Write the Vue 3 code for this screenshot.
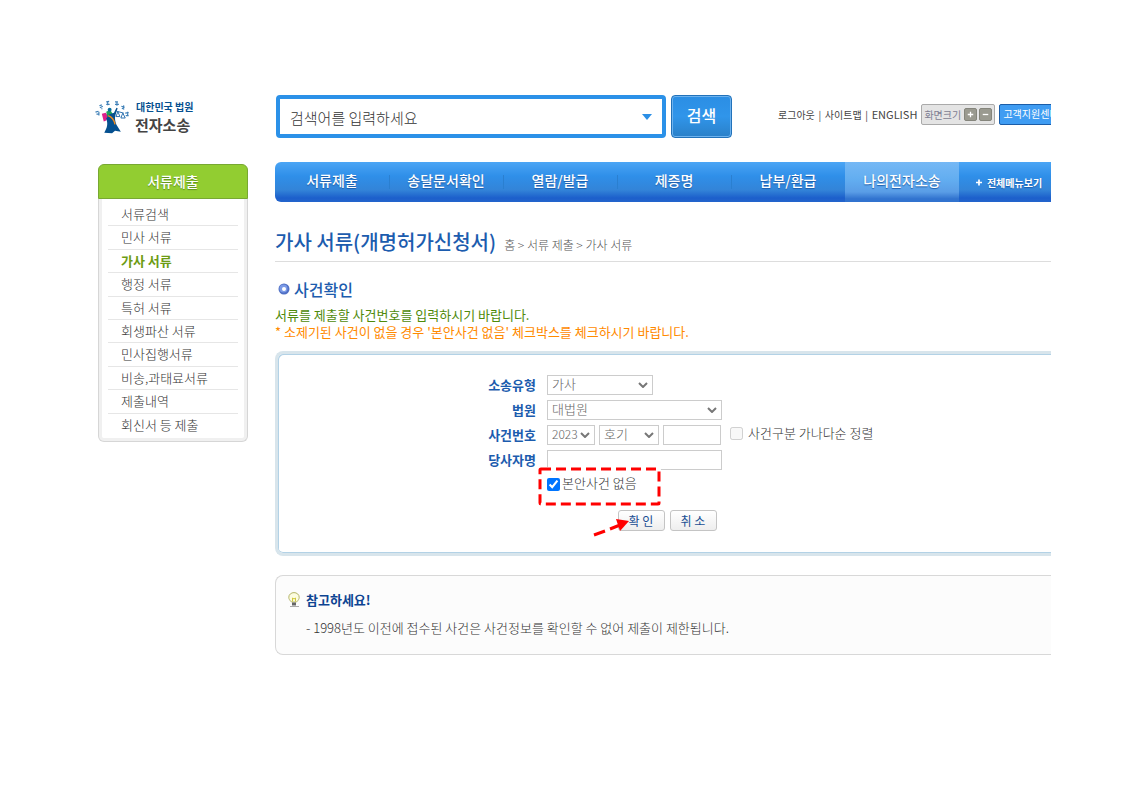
<script setup>
import { ref } from 'vue'

const keyword = ref('')
const noMainCase = ref(true)
const sortByName = ref(false)
const caseNumber = ref('')
const partyName = ref('')

const sideItems = [
  '서류검색', '민사 서류', '가사 서류', '행정 서류', '특허 서류',
  '회생파산 서류', '민사집행서류', '비송,과태료서류', '제출내역', '회신서 등 제출'
]
const activeSide = '가사 서류'

const navItems = ['서류제출', '송달문서확인', '열람/발급', '제증명', '납부/환급', '나의전자소송']
const activeNav = '나의전자소송'
</script>

<template>
  <div class="page">
    <header class="header">
      <a class="logo" href="#">
        <svg class="logo-mark" viewBox="0 0 40 40" aria-hidden="true">
          <g fill="none" stroke="#3f80b8" stroke-width="1.2">
            <path d="M0 13.500l3-1M1 15.500h2M3.500 13v4" />
            <path d="M4 7l2.500-1M4.500 9l3-1.500M6.500 9.500v1" />
            <path d="M11 3l3-.5M11 5.500h3.500M12.500 3v3.500" />
            <path d="M20 3h3M20 5.500h4M22 3v4" />
            <path d="M26.500 7.500l3.500 1M27 9.500l2.500 1M29 6.500l-.5 3" />
            <path d="M30.500 14.500l3.500-.5M31 17h3M33 13v3.500" />
          </g>
          <path d="M6.500 15l4-1 2.500 4-2 4-2.500 1z" fill="#e0218a" />
          <path d="M11 13l4-2 3 5-4 3-2-1z" fill="#1fa05a" />
          <circle cx="14.500" cy="11" r="2" fill="#0b6fa0" />
          <path d="M11 20l3-4 5-2 2.500-5 1.200.5-2.200 7c-1 3-.5 6 1 10l4.500 7-6-1-3 2.500-8-.5c3-5 4-9 2-14.500z" fill="#05508f" />
          <path d="M13 17c3 1 6 4 7 9" fill="none" stroke="#f08a1c" stroke-width="1.500" />
          <path d="M21.500 12.500l7.500 2M23 13l-2 5h4zM28 14.500l-2 5h4.500z" fill="none" stroke="#2a6fae" stroke-width="1" />
        </svg>
        <span class="logo-text">
          <span class="logo-small">대한민국 법원</span>
          <strong class="logo-big">전자소송</strong>
        </span>
      </a>
      <div class="top">
        <form class="search" @submit.prevent>
          <div class="search-box">
            <input v-model="keyword" class="search-input" type="text" aria-label="검색어" placeholder="검색어를 입력하세요" />
            <svg class="search-arrow" viewBox="0 0 10 6" aria-hidden="true"><path d="M0 0h10L5 6z" fill="#2b8fe6" /></svg>
          </div>
          <button class="search-button" type="submit">검색</button>
        </form>
        <div class="utility">
          <a href="#">로그아웃</a><i class="bar">|</i>
          <a href="#">사이트맵</a><i class="bar">|</i>
          <a class="english" href="#">ENGLISH</a>
          <span class="zoomer">
            <span class="zoomer-label">화면크기</span>
            <button type="button" aria-label="크게"><svg viewBox="0 0 12 12"><path d="M3 6h6M6 3v6" stroke="#fff" stroke-width="1.4" /></svg></button>
            <button type="button" aria-label="작게"><svg viewBox="0 0 12 12"><path d="M3 6h6" stroke="#fff" stroke-width="1.4" /></svg></button>
          </span>
          <a class="support" href="#">고객지원센터</a>
        </div>
      </div>
    </header>

    <div class="body">
      <aside class="side">
        <h2 class="side-title">서류제출</h2>
        <ul class="side-list">
          <li v-for="item in sideItems" :key="item">
            <a href="#" :class="{ active: item === activeSide }">{{ item }}</a>
          </li>
        </ul>
      </aside>

      <main class="main">
        <nav class="nav">
          <a v-for="item in navItems" :key="item" class="nav-item" :class="{ current: item === activeNav }" href="#">{{ item }}</a>
          <a class="nav-all" href="#">
            <svg viewBox="0 0 7 7" aria-hidden="true"><path d="M0 3.5h7M3.5 0v7" stroke="#fff" stroke-width="2" /></svg>
            전체메뉴보기
          </a>
        </nav>

        <div class="title-row">
          <h1>가사 서류(개명허가신청서)</h1>
          <span class="crumbs">홈 &gt; 서류 제출 &gt; 가사 서류</span>
        </div>

        <h2 class="section">
          <svg viewBox="0 0 12 12" aria-hidden="true">
            <circle cx="6" cy="6" r="5.5" fill="#4f6fc4" />
            <circle cx="5.5" cy="5.5" r="4" fill="#7b9ae6" />
            <circle cx="6" cy="6" r="2" fill="#fff" />
          </svg>
          사건확인
        </h2>
        <p class="guide">서류를 제출할 사건번호를 입력하시기 바랍니다.</p>
        <p class="guide warn">* 소제기된 사건이 없을 경우 '본안사건 없음' 체크박스를 체크하시기 바랍니다.</p>

        <form class="case-form" @submit.prevent>
          <div class="row">
            <label class="name" for="kind">소송유형</label>
            <div class="fields">
              <span class="pick pick-kind">
                <select id="kind" disabled><option>가사</option></select>
                <svg viewBox="0 0 10 6" aria-hidden="true"><path d="M1 1l4 4 4-4" /></svg>
              </span>
            </div>
          </div>
          <div class="row">
            <label class="name" for="court">법원</label>
            <div class="fields">
              <span class="pick pick-court">
                <select id="court" disabled><option>대법원</option></select>
                <svg viewBox="0 0 10 6" aria-hidden="true"><path d="M1 1l4 4 4-4" /></svg>
              </span>
            </div>
          </div>
          <div class="row">
            <label class="name" for="year">사건번호</label>
            <div class="fields">
              <span class="pick pick-year">
                <select id="year" disabled><option>2023</option></select>
                <svg viewBox="0 0 10 6" aria-hidden="true"><path d="M1 1l4 4 4-4" /></svg>
              </span>
              <span class="pick pick-mark">
                <select disabled aria-label="사건구분"><option>호기</option></select>
                <svg viewBox="0 0 10 6" aria-hidden="true"><path d="M1 1l4 4 4-4" /></svg>
              </span>
              <input v-model="caseNumber" class="box number" type="text" aria-label="번호" disabled />
              <label class="check sort"><input v-model="sortByName" type="checkbox" disabled />사건구분 가나다순 정렬</label>
            </div>
          </div>
          <div class="row">
            <label class="name" for="party">당사자명</label>
            <div class="fields">
              <input id="party" v-model="partyName" class="box party" type="text" disabled />
            </div>
          </div>
          <div class="row">
            <span></span>
            <div class="fields marked">
              <label class="check none"><input v-model="noMainCase" type="checkbox" />본안사건 없음</label>
              <svg class="callout" viewBox="0 0 124 72" aria-hidden="true">
                <rect x="2" y="2" width="119" height="35" rx="1" class="halo" />
                <rect x="2" y="2" width="119" height="35" rx="1" class="dash" />
                <path d="M56 68l11-4M72 62l10-4" class="shaft" />
                <path d="M78 52l13 2-9 10z" fill="#f00" />
              </svg>
            </div>
          </div>
          <div class="actions">
            <button type="submit">확 인</button>
            <button type="button">취 소</button>
          </div>
        </form>

        <section class="notice">
          <h3>
            <svg viewBox="0 0 12 16" aria-hidden="true">
              <path d="M3.5 10C1.5 8 .8 7 .8 5.2a5.2 4.6 0 0 1 10.4 0C11.2 7 10.5 8 8.500 10z" fill="#fcfce0" stroke="#b4b468" />
              <path d="M4.500 9.500V6l1.500 1 1.500-1v3.500" fill="none" stroke="#d0c83c" />
              <path d="M4 10.500h4v3H4z" fill="#666" />
              <path d="M2 14.500h9" stroke="#aaa" />
            </svg>
            참고하세요!
          </h3>
          <p>- 1998년도 이전에 접수된 사건은 사건정보를 확인할 수 없어 제출이 제한됩니다.</p>
        </section>
      </main>
    </div>
  </div>
</template>

<style>
body {
  margin: 0;
  background: #fff;
}
</style>

<style scoped>
.page,
.page button,
.page input,
.page select {
  font-family: "Noto Sans CJK KR", sans-serif;
}
.page {
  box-sizing: border-box;
  padding: 95px 71px 40px 95px;
  overflow: hidden;
  color: #333;
  font-size: 13px;
  font-weight: 300;
}
.page * {
  box-sizing: border-box;
}
a {
  color: inherit;
  text-decoration: none;
}
h1, h2, h3, p, ul {
  margin: 0;
  padding: 0;
}
.header,
.body {
  display: grid;
  grid-template-columns: 153px minmax(0, 1fr);
  column-gap: 27px;
}
.header {
  margin-bottom: 24px;
}

.logo {
  display: flex;
  align-items: flex-start;
  padding-top: 4px;
}
.logo-mark {
  width: 40px;
  height: 39px;
}
.logo-text {
  display: flex;
  flex-direction: column;
  white-space: nowrap;
}
.logo-small {
  color: #05508f;
  font-size: 10px;
  font-weight: 700;
  line-height: 16px;
  padding-left: 1px;
}
.logo-big {
  color: #444;
  font-size: 15px;
  font-weight: 700;
  line-height: 20px;
}

.top {
  display: flex;
  justify-content: space-between;
  overflow: hidden;
}
.search {
  display: flex;
  gap: 5px;
  padding-left: 1px;
}
.search-box {
  display: flex;
  align-items: center;
  width: 390px;
  height: 43px;
  padding: 0 10px;
  border: 4px solid #2b91e8;
  border-radius: 4px;
}
.search-input {
  flex: 1;
  min-width: 0;
  height: 32px;
  padding: 2px 0 0;
  border: 0;
  outline: 0;
  background: none;
  color: #444;
  font-size: 15px;
  font-weight: 300;
}
.search-input::placeholder {
  color: #333;
}
.search-arrow {
  width: 10px;
  height: 6px;
}
.search-button {
  width: 61px;
  height: 43px;
  padding: 0 0 3px;
  border: 1px solid #2272ba;
  border-radius: 4px;
  background: linear-gradient(#2b8ee4, #3095ea 50%, #2a80c8);
  box-shadow: inset 0 0 0 1px #6db2ee;
  color: #fff;
  font-size: 16px;
  font-weight: 500;
}
.utility {
  display: flex;
  align-items: center;
  width: 273px;
  height: 22px;
  margin-top: 8px;
  color: #444;
  font-size: 10px;
  font-weight: 400;
  white-space: nowrap;
}
.utility > * {
  flex: none;
}
.bar {
  width: 10px;
  text-align: center;
  font-style: normal;
}
.english {
  font-size: 11px;
}
.zoomer {
  display: flex;
  align-items: center;
  gap: 2px;
  width: 74px;
  height: 21px;
  margin-left: 4px;
  padding-left: 2px;
  border: 1px solid #aaa;
  border-radius: 2px;
  background: #e4e4e4;
}
.zoomer-label {
  width: 38px;
  color: #7d7d92;
}
.zoomer button {
  width: 13px;
  height: 13px;
  padding: 0;
  border: 1px solid #85857c;
  border-radius: 2px;
  background: #9a9a90;
}
.zoomer svg {
  display: block;
  width: 11px;
  height: 11px;
}
.support {
  height: 21px;
  margin-left: 4px;
  padding: 0 3px;
  border: 1px solid #1b5da8;
  border-radius: 2px;
  background: #3f9cf2;
  color: #fff;
  line-height: 18px;
}

.side {
  margin: 2px 0 0 3px;
}
.side-title {
  height: 35px;
  border: 1px solid #78a832;
  border-radius: 6px 6px 0 0;
  background: #92cd31;
  color: #fff;
  font-size: 14px;
  font-weight: 500;
  line-height: 32px;
  text-align: center;
  text-shadow: 0 1px 1px #5d8c1c;
}
.side-list {
  display: grid;
  grid-auto-rows: 1fr;
  min-height: 243px;
  padding: 4px 6px;
  border: 1px solid #d6d6d6;
  border-top: 0;
  border-radius: 0 0 6px 6px;
  box-shadow: inset 3px 0 #f0f0f0, inset -3px 0 #f0f0f0, inset 0 -3px #f0f0f0;
  list-style: none;
}
.side-list li {
  margin: 0 3px;
  padding-left: 13px;
  border-bottom: 1px solid #e6e6e6;
  line-height: 22px;
}
.side-list li:last-child {
  border-bottom: 0;
}
.side-list .active {
  color: #6d9c14;
  font-weight: 700;
}

.nav {
  display: grid;
  grid-template-columns: repeat(6, minmax(0, 114fr)) minmax(0, 92fr);
  height: 40px;
  overflow: hidden;
  border-radius: 6px 0 0 6px;
  background: linear-gradient(#4ba5f5, #2f8fe9 35%, #3384d8 70%, #1c5fcb 90%, #2465cc);
  color: #fff;
  font-size: 14px;
  font-weight: 500;
  line-height: 37px;
  text-align: center;
  text-shadow: 0 1px 1px #1d5ba8;
  white-space: nowrap;
}
.nav-item + .nav-item:not(.current) {
  background: linear-gradient(#2a7fd0, #2a7fd0) 0 50% / 1px 14px no-repeat;
}
.nav .current {
  background: linear-gradient(#75b8f5, #62adf0 45%, #5a9de6 75%, #3173cf 92%);
}
.nav-all {
  display: flex;
  align-items: center;
  justify-content: center;
  gap: 5px;
  padding-left: 8px;
  font-size: 10px;
  font-weight: 700;
}
.nav-all svg {
  width: 6px;
  height: 7px;
}

.title-row {
  display: flex;
  align-items: baseline;
  gap: 8px;
  margin-top: 28px;
  padding-bottom: 6px;
  border-bottom: 1px solid #ddd;
  white-space: nowrap;
}
h1 {
  color: #1c5cae;
  font-size: 20px;
  font-weight: 500;
  line-height: 24px;
}
.crumbs {
  color: #555;
  font-size: 12px;
  line-height: 20px;
}
.section {
  display: flex;
  align-items: center;
  gap: 4px;
  margin: 17px 0 7px;
  padding-left: 3px;
  color: #1c5cae;
  font-size: 16px;
  font-weight: 500;
  line-height: 20px;
}
.section svg {
  width: 12px;
  height: 12px;
}
.guide {
  color: #4f8a0a;
  font-weight: 400;
  line-height: 17px;
}
.guide.warn {
  color: #ff8a00;
}

.case-form {
  display: grid;
  row-gap: 5px;
  margin-top: 11px;
  padding: 21px 0 22px;
  border: 3px solid #d8e5ec;
  border-right: 0;
  border-radius: 8px 0 0 8px;
  box-shadow: inset 1px 1px #b3d2e6, inset 0 -1px #b3d2e6;
}
.row {
  display: grid;
  grid-template-columns: 258px minmax(0, 1fr);
  column-gap: 11px;
  height: 20px;
}
.name {
  color: #1c5cae;
  font-weight: 700;
  line-height: 20px;
  text-align: right;
}
.fields {
  display: flex;
  align-items: flex-start;
  gap: 4px;
}
.pick {
  display: grid;
  align-items: center;
}
.pick select,
.pick svg {
  grid-area: 1 / 1;
}
.pick svg {
  justify-self: end;
  width: 10px;
  height: 6px;
  margin-right: 5px;
  fill: none;
  stroke: #777;
  stroke-width: 2;
  pointer-events: none;
}
.pick select,
.box {
  width: 100%;
  height: 20px;
  border: 1px solid #ccc;
  border-radius: 0;
  background: #fff;
}
.pick select {
  appearance: none;
  padding: 0 4px 2px;
  color: #666;
  font-size: 13px;
  font-weight: 300;
  line-height: 16px;
  opacity: 1;
}
.pick-kind { width: 106px; }
.pick-court { width: 175px; }
.pick-year { width: 48px; }
.pick-year select { font-size: 12px; }
.pick-mark { width: 60px; }
.box.number { width: 58px; }
.box.party { width: 175px; }
.check {
  display: flex;
  align-items: flex-start;
  line-height: 16px;
  white-space: nowrap;
}
.check input {
  width: 13px;
  height: 13px;
  margin: 2px 0 0;
}
.sort {
  gap: 5px;
  padding-left: 5px;
}
.none {
  gap: 2px;
}
.none input {
  margin-top: 3px;
}
.marked {
  position: relative;
}
.callout {
  position: absolute;
  left: -9px;
  top: -8px;
  width: 124px;
  height: 72px;
  pointer-events: none;
}
.halo,
.dash {
  fill: none;
}
.halo {
  stroke: #fff;
  stroke-width: 4;
}
.dash {
  stroke: #f00;
  stroke-width: 3;
  stroke-dasharray: 10 5;
}
.shaft {
  fill: none;
  stroke: #f00;
  stroke-width: 3;
}
.actions {
  display: flex;
  justify-content: center;
  gap: 5px;
  margin-top: 10px;
  padding-left: 5px;
}
.actions button {
  width: 47px;
  height: 21px;
  padding: 0;
  border: 1px solid #c4c4c4;
  border-radius: 3px;
  background: linear-gradient(#fff, #eee);
  color: #1a4f93;
  font-size: 12px;
  font-weight: 400;
  line-height: 18px;
}

.notice {
  margin-top: 19px;
  padding: 14px 0 17px 12px;
  border: 1px solid #d8d8d8;
  border-right: 0;
  border-radius: 8px 0 0 8px;
  background: #fcfcfc;
}
.notice h3 {
  display: flex;
  align-items: center;
  gap: 6px;
  color: #0d4492;
  font-size: 13px;
  font-weight: 700;
  line-height: 20px;
}
.notice svg {
  width: 12px;
  height: 16px;
}
.notice p {
  margin-top: 9px;
  padding-left: 18px;
  line-height: 18px;
}
</style>
